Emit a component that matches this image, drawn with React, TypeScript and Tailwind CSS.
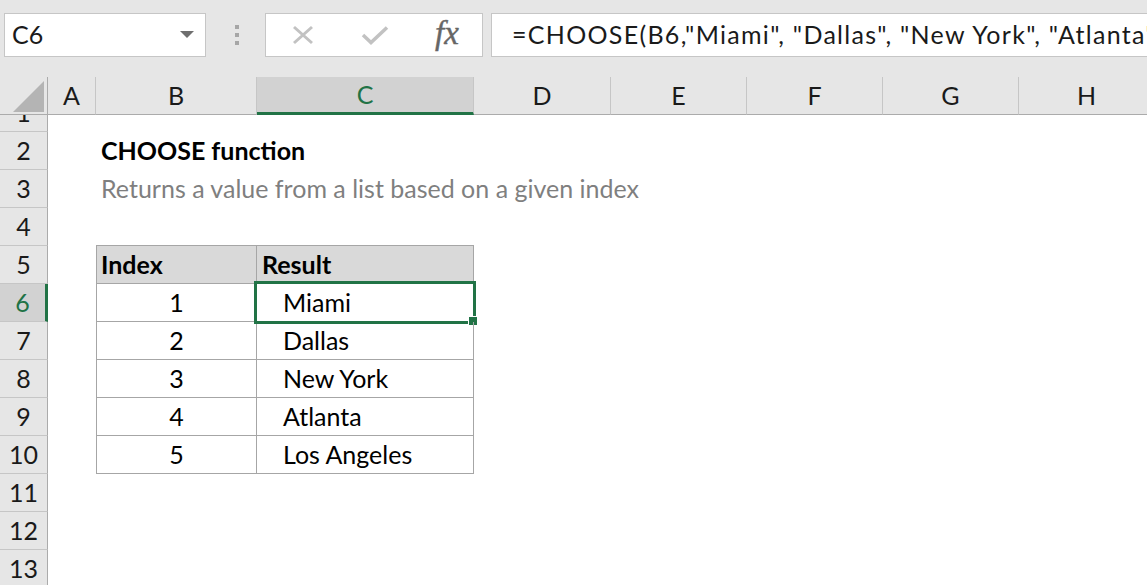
import clsx from "clsx";

const GREEN = "#217346";

function ColHead({ label, w, active }: { label: string; w: string; active?: boolean }) {
  return (
    <div
      className={clsx(
        "shrink-0 h-full flex items-center justify-center border-r border-r-[#c6c6c6]",
        w,
        active
          ? "bg-[#d2d2d2] text-[#217346] border-b-[3px] border-b-[#217346]"
          : "border-b border-b-[#ababab] text-[#1a1a1a]"
      )}
    >
      {label}
    </div>
  );
}

function RowHead({ n, active, clip }: { n: number; active?: boolean; clip?: boolean }) {
  return (
    <div
      className={clsx(
        "w-[48px] shrink-0 h-full border-b border-b-[#c6c6c6] overflow-hidden",
        active
          ? "bg-[#d2d2d2] text-[#217346] border-r-[3px] border-r-[#217346]"
          : "bg-[#e6e6e6] text-[#1a1a1a] border-r border-r-[#ababab]"
      )}
    >
      <div className={clsx("h-[37px] flex items-center justify-center", clip && "-mt-[21px]")}>{n}</div>
    </div>
  );
}

type Entry = { idx: number; city: string };

const data: Entry[] = [
  { idx: 1, city: "Miami" },
  { idx: 2, city: "Dallas" },
  { idx: 3, city: "New York" },
  { idx: 4, city: "Atlanta" },
  { idx: 5, city: "Los Angeles" },
];

function Toolbar() {
  return (
    <div className="h-[77px] bg-[#e6e6e6] flex items-start pt-[13px] pl-[4px] overflow-hidden">
      {/* name box */}
      <div className="w-[202px] h-[44px] shrink-0 bg-white border border-[#c6c6c6] flex items-center justify-between pl-[7px] pr-[11px] text-[#1a1a1a]">
        <span>C6</span>
        <svg width="14" height="8" viewBox="0 0 14 8">
          <polygon points="0,0 14,0 7,7" fill="#6f6f6f" />
        </svg>
      </div>

      {/* grip dots */}
      <div className="w-[59px] shrink-0 h-[44px] flex flex-col items-center justify-center gap-[4px] pl-[3px]">
        <span className="w-[4px] h-[4px] bg-[#a6a6a6]" />
        <span className="w-[4px] h-[4px] bg-[#a6a6a6]" />
        <span className="w-[4px] h-[4px] bg-[#a6a6a6]" />
      </div>

      {/* cancel / enter / fx */}
      <div className="w-[218px] h-[44px] shrink-0 bg-white border border-[#c6c6c6] grid grid-cols-3 items-center justify-items-center">
        <svg width="24" height="20" viewBox="0 0 24 20" className="ml-[2px]">
          <path d="M3 2 L21 18 M21 2 L3 18" stroke="#c2c2c2" strokeWidth="3" fill="none" />
        </svg>
        <svg width="28" height="20" viewBox="0 0 28 20" className="ml-[2px]">
          <path d="M2 10 L10 17.5 L26 2.5" stroke="#c2c2c2" strokeWidth="3.5" fill="none" />
        </svg>
        <span className="font-['Liberation_Serif',serif] italic text-[33px] leading-none text-[#666666] -mt-[4px] ml-[2px] [-webkit-text-stroke:0.4px_#666666]">
          fx
        </span>
      </div>

      {/* formula bar */}
      <div className="ml-[8px] w-[700px] h-[44px] shrink-0 bg-white border border-[#c6c6c6] flex items-center pl-[20px] whitespace-nowrap overflow-hidden text-[#1a1a1a] tracking-[1.3px]">
        =CHOOSE(B6,"Miami", "Dallas", "New York", "Atlanta", "Los Angeles")
      </div>
    </div>
  );
}

function HeaderRow() {
  return (
    <div className="flex h-[38px] bg-[#e6e6e6]">
      <div className="w-[48px] shrink-0 h-full border-r border-r-[#ababab] border-b border-b-[#ababab] flex items-end justify-end pr-[3px] pb-[2px]">
        <svg width="31" height="31" viewBox="0 0 31 31">
          <polygon points="0,31 31,31 31,0" fill="#b4b4b4" />
        </svg>
      </div>
      <ColHead label="A" w="w-[48px]" />
      <ColHead label="B" w="w-[161px]" />
      <ColHead label="C" w="w-[217px]" active />
      <ColHead label="D" w="w-[137px]" />
      <ColHead label="E" w="w-[136px]" />
      <ColHead label="F" w="w-[136px]" />
      <ColHead label="G" w="w-[136px]" />
      <ColHead label="H" w="w-[136px]" />
    </div>
  );
}

export default function App() {
  return (
    <div className="w-[1147px] h-[585px] overflow-hidden bg-white font-['Lato',sans-serif] text-[25px] text-black">
      <Toolbar />
      <HeaderRow />

      {/* row 1, scrolled partly out of view */}
      <div className="flex h-[17px]">
        <RowHead n={1} clip />
      </div>

      {/* row 2 */}
      <div className="flex h-[38px]">
        <RowHead n={2} />
        <div className="w-[48px] shrink-0" />
        <div className="w-[161px] shrink-0 pl-[5px] flex items-center whitespace-nowrap font-bold pb-[1px]">
          CHOOSE function
        </div>
      </div>

      {/* row 3 */}
      <div className="flex h-[38px]">
        <RowHead n={3} />
        <div className="w-[48px] shrink-0" />
        <div className="w-[161px] shrink-0 pl-[5px] flex items-center whitespace-nowrap text-[#7f7f7f] pb-[1px]">
          Returns a value from a list based on a given index
        </div>
      </div>

      {/* row 4 */}
      <div className="flex h-[38px]">
        <RowHead n={4} />
        <div className="w-[48px] shrink-0" />
        <div className="w-[161px] shrink-0 border-b border-[#a6a6a6]" />
        <div className="w-[217px] shrink-0 border-b border-[#a6a6a6]" />
      </div>

      {/* row 5: table header */}
      <div className="flex h-[38px]">
        <RowHead n={5} />
        <div className="w-[48px] shrink-0" />
        <div className="w-[161px] shrink-0 border-l border-r border-b border-[#a6a6a6] bg-[#d9d9d9] pl-[4px] flex items-center font-bold">
          Index
        </div>
        <div className="w-[217px] shrink-0 border-r border-b border-[#a6a6a6] bg-[#d9d9d9] pl-[5px] flex items-center font-bold">
          Result
        </div>
      </div>

      {data.map((d, i) => (
        <div key={d.idx} className="flex h-[38px]">
          <RowHead n={6 + i} active={i === 0} />
          <div className="w-[48px] shrink-0" />
          <div className="w-[161px] shrink-0 border-l border-r border-b border-[#a6a6a6] flex items-center justify-center">
            {d.idx}
          </div>
          <div className="relative w-[217px] shrink-0 border-r border-b border-[#a6a6a6] pl-[26px] flex items-center">
            {d.city}
            {i === 0 && (
              <>
                <div className="absolute -inset-[3px] border-[3px]" style={{ borderColor: GREEN }} />
                <div className="absolute left-[211px] top-[32px] w-[10px] h-[10px] bg-[#217346] border border-white" />
              </>
            )}
          </div>
        </div>
      ))}

      {[11, 12, 13].map((n) => (
        <div key={n} className="flex h-[38px]">
          <RowHead n={n} />
        </div>
      ))}
    </div>
  );
}
